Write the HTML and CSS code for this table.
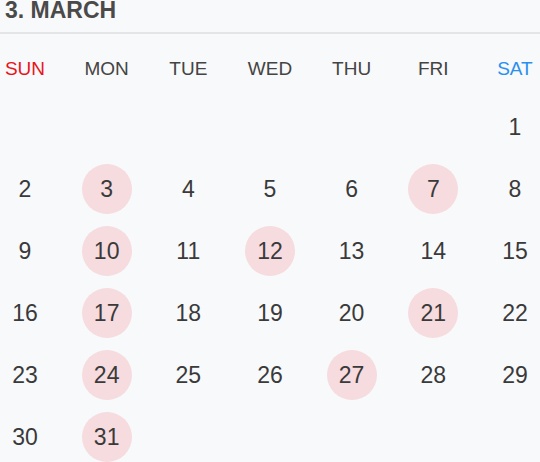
FILE: index.html
```html
<!DOCTYPE html>
<html>
<head>
<meta charset="utf-8">
<link rel="stylesheet" href="styles.css">
</head>
<body>
<div class="cal">
  <div class="title">3. MARCH</div>
  <div class="week">
    <div class="wd sun">SUN</div>
    <div class="wd">MON</div>
    <div class="wd">TUE</div>
    <div class="wd">WED</div>
    <div class="wd">THU</div>
    <div class="wd">FRI</div>
    <div class="wd sat">SAT</div>
  </div>
  <div class="days">
    <div class="row">
      <div class="d"></div><div class="d"></div><div class="d"></div><div class="d"></div><div class="d"></div><div class="d"></div><div class="d">1</div>
    </div>
    <div class="row">
      <div class="d">2</div><div class="d on">3</div><div class="d">4</div><div class="d">5</div><div class="d">6</div><div class="d on">7</div><div class="d">8</div>
    </div>
    <div class="row">
      <div class="d">9</div><div class="d on">10</div><div class="d">11</div><div class="d on">12</div><div class="d">13</div><div class="d">14</div><div class="d">15</div>
    </div>
    <div class="row">
      <div class="d">16</div><div class="d on">17</div><div class="d">18</div><div class="d">19</div><div class="d">20</div><div class="d on">21</div><div class="d">22</div>
    </div>
    <div class="row">
      <div class="d">23</div><div class="d on">24</div><div class="d">25</div><div class="d">26</div><div class="d on">27</div><div class="d">28</div><div class="d">29</div>
    </div>
    <div class="row">
      <div class="d">30</div><div class="d on">31</div><div class="d"></div><div class="d"></div><div class="d"></div><div class="d"></div><div class="d"></div>
    </div>
  </div>
</div>
</body>
</html>
```

FILE: styles.css
```css
html, body {
  margin: 0;
  padding: 0;
  background: #f8f9fa;
  overflow: hidden;
}
.cal {
  width: 540px;
  font-family: "Liberation Sans", Arial, sans-serif;
  color: #3a3a3a;
}
.title {
  font-size: 23px;
  font-weight: bold;
  color: #4a4a4a;
  line-height: 20px;
  height: 20px;
  padding: 0 0 12px 5px;
  border-bottom: 2px solid #e4e5e7;
}
.week {
  display: flex;
  justify-content: space-between;
  margin-top: 15px;
  margin-bottom: 13px;
}
.wd {
  width: 50px;
  height: 40px;
  display: flex;
  align-items: center;
  justify-content: center;
  font-size: 19px;
  color: #444;
}
.wd.sun { color: #e8141c; }
.wd.sat { color: #2a8ff0; }
.days {
  display: flex;
  flex-direction: column;
  gap: 12px;
}
.row {
  display: flex;
  justify-content: space-between;
}
.d {
  width: 50px;
  height: 50px;
  border-radius: 50%;
  display: flex;
  align-items: center;
  justify-content: center;
  font-size: 23px;
}
.d.on { background: #f6dbdf; }
```
